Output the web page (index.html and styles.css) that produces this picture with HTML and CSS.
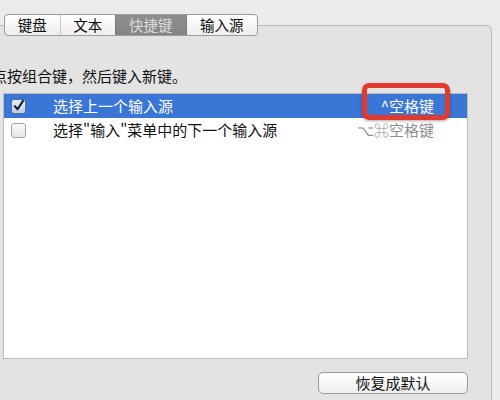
FILE: index.html
```html
<!DOCTYPE html>
<html lang="zh-CN">
<head>
<meta charset="utf-8">
<link rel="stylesheet" href="styles.css">
</head>
<body>
<div class="window">
  <div class="tabs">
    <div class="tab tab-kb">键盘</div>
    <div class="tab tab-text">文本</div>
    <div class="tab tab-sel">快捷键</div>
    <div class="tab tab-src">输入源</div>
  </div>
  <div class="panel">
    <div class="hint">点按组合键，然后键入新键。</div>
    <div class="list">
      <div class="row row-sel">
        <span class="check checked">
          <svg viewBox="0 0 14 14" width="14" height="14"><path d="M3 7.2 L6 10.5 L11.8 1.5" fill="none" stroke="#1a1a1a" stroke-width="2.2" stroke-linecap="round" stroke-linejoin="round"/></svg>
        </span>
        <span class="label">选择上一个输入源</span>
        <span class="key">^空格键</span>
      </div>
      <div class="row">
        <span class="check"></span>
        <span class="label">选择"输入"菜单中的下一个输入源</span>
        <span class="key key-dim">⌥⌘空格键</span>
      </div>
      <div class="mark"></div>
    </div>
    <div class="actions">
      <button class="btn">恢复成默认</button>
    </div>
  </div>
</div>
</body>
</html>
```
FILE: styles.css
```css
html, body {
  margin: 0;
  padding: 0;
}
body {
  width: 500px;
  height: 400px;
  overflow: hidden;
  background: #ececec;
  font-family: "Noto Sans CJK SC", "Noto Sans", sans-serif;
  font-size: 15px;
  color: #111;
}
.window {
  padding-top: 14px;
}
.tabs {
  position: relative;
  z-index: 2;
  display: flex;
  margin-left: 4px;
  width: 254px;
  height: 22px;
  box-sizing: border-box;
  border: 1px solid #9c9c9c;
  border-radius: 4px;
  overflow: hidden;
  background: linear-gradient(#ffffff, #eeeeee);
}
.tab {
  display: flex;
  align-items: center;
  justify-content: center;
  height: 100%;
  line-height: 20px;
  color: #0a0a0a;
  font-size: 14.5px;
}
.tab-kb { width: 55px; border-right: 1px solid #c8c8c8; }
.tab-text { width: 55px; }
.tab-sel {
  width: 70px;
  background: linear-gradient(#8e8e8e, #858585);
  color: #dcdcdc;
  border-left: 1px solid #7a7a7a;
  border-right: 1px solid #7a7a7a;
}
.tab-src { width: 71px; }
.panel {
  margin-top: -11px;
  margin-left: -20px;
  width: 512px;
  height: 420px;
  box-sizing: border-box;
  border: 1px solid #b9b9b9;
  border-radius: 5px;
  background: #e3e3e3;
  padding: 41px 0 0 22px;
}
.hint {
  margin-left: -11px;
  height: 18px;
  line-height: 18px;
  color: #111;
  white-space: nowrap;
}
.list {
  position: relative;
  margin-top: 8px;
  width: 465px;
  height: 266px;
  box-sizing: border-box;
  border: 1px solid #bdbdbd;
  background: #ffffff;
}
.row {
  display: flex;
  align-items: center;
  height: 24px;
  padding-left: 7px;
  padding-right: 33px;
}
.row-sel {
  background: #3a76d6;
  color: #ffffff;
}
.check {
  display: flex;
  align-items: center;
  justify-content: center;
  width: 15px;
  height: 15px;
  box-sizing: border-box;
  border: 1px solid #a4a4a4;
  border-radius: 3px;
  background: linear-gradient(#fbfbfb, #e6e6e6);
}
.check.checked {
  border-color: #5a6f9a;
  background: linear-gradient(#e4ecfa, #b9cdef);
}
.label {
  margin-left: 27px;
  line-height: 18px;
  white-space: nowrap;
}
.key {
  margin-left: auto;
  white-space: nowrap;
  line-height: 18px;
}
.key-dim {
  color: #8f8f8f;
}
.mark {
  position: absolute;
  left: 358px;
  top: -11px;
  width: 88px;
  height: 37px;
  box-sizing: border-box;
  border: 5px solid #e2392e;
  border-radius: 7px;
  box-shadow: 0 1px 3px rgba(0,0,0,0.35);
}
.actions {
  display: flex;
  justify-content: flex-end;
  width: 465px;
  margin-top: 13px;
}
.btn {
  width: 150px;
  height: 22px;
  box-sizing: border-box;
  border: 1px solid #9a9a9a;
  border-radius: 5px;
  background: linear-gradient(#ffffff, #ededed);
  font-family: "Noto Sans CJK SC", "Noto Sans", sans-serif;
  font-size: 15px;
  color: #111;
  padding: 0;
  line-height: 20px;
}
```
